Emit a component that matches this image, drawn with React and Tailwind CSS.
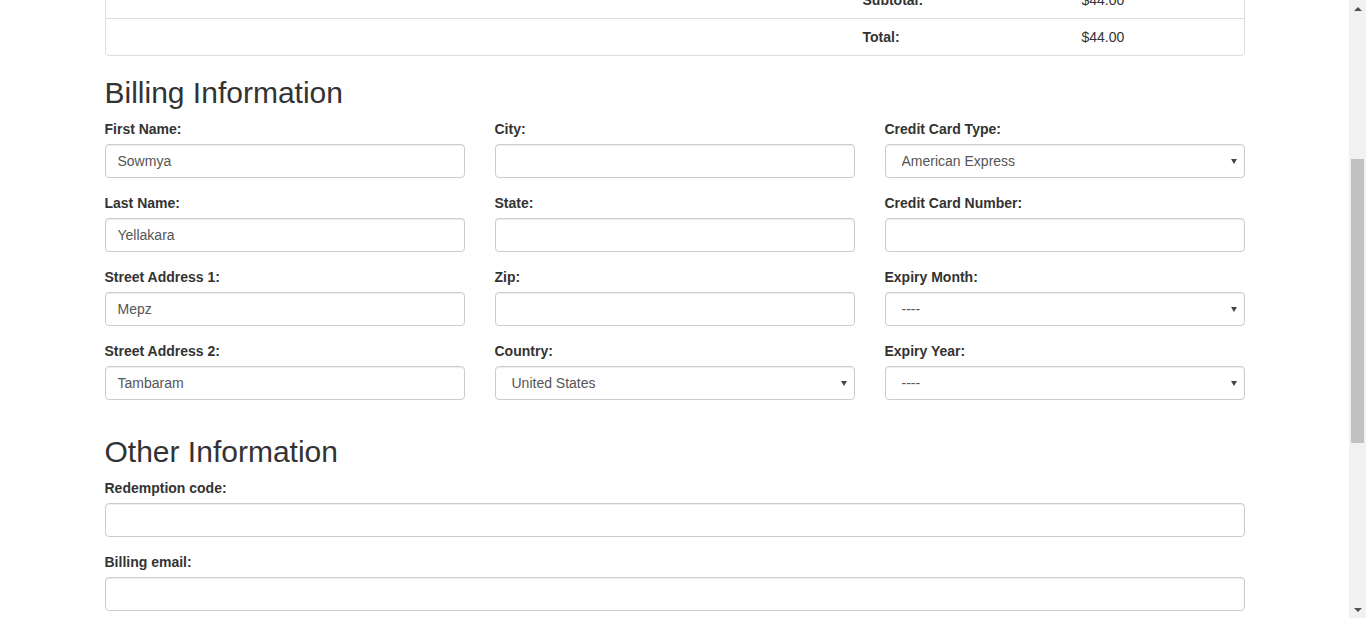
const billingRows = [
  [
    { label: "First Name:", value: "Sowmya" },
    { label: "City:", value: "" },
    { label: "Credit Card Type:", value: "American Express", select: true },
  ],
  [
    { label: "Last Name:", value: "Yellakara" },
    { label: "State:", value: "" },
    { label: "Credit Card Number:", value: "" },
  ],
  [
    { label: "Street Address 1:", value: "Mepz" },
    { label: "Zip:", value: "" },
    { label: "Expiry Month:", value: "----", select: true },
  ],
  [
    { label: "Street Address 2:", value: "Tambaram" },
    { label: "Country:", value: "United States", select: true },
    { label: "Expiry Year:", value: "----", select: true },
  ],
];

const inputClass =
  "block w-full h-[34px] px-3 text-[14px] text-[#555] bg-white border border-[#ccc] rounded-[4px] shadow-[inset_0_1px_1px_rgba(0,0,0,0.075)] outline-none";

const Field = ({ label, value, select }) => {
  return (
    <div className="mb-[15px]">
      <label className="block mb-[5px] text-[14px] leading-[20px] font-bold text-[#333]">
        {label}
      </label>

      {select ? (
        <div className="relative">
          <select
            defaultValue={value}
            className={`${inputClass} appearance-none pl-4`}
          >
            <option>{value}</option>
          </select>
          {/* arrow */}
          <span className="pointer-events-none absolute right-[8px] top-[15px] w-0 h-0 border-l-[3px] border-r-[3px] border-t-[5px] border-l-transparent border-r-transparent border-t-[#444]" />
        </div>
      ) : (
        <input type="text" defaultValue={value} className={inputClass} />
      )}
    </div>
  );
};

const Scrollbar = () => {
  return (
    <div className="w-[17px] shrink-0 bg-[#f1f1f1] flex flex-col">
      <div className="h-[17px] flex items-center justify-center">
        <span className="w-0 h-0 border-l-[4px] border-r-[4px] border-b-[4px] border-l-transparent border-r-transparent border-b-[#505050]" />
      </div>

      <div className="flex-1">
        <div className="mt-[142px] mx-[2px] h-[284px] bg-[#c1c1c1]" />
      </div>

      <div className="h-[17px] flex items-center justify-center">
        <span className="w-0 h-0 border-l-[4px] border-r-[4px] border-t-[4px] border-l-transparent border-r-transparent border-t-[#505050]" />
      </div>
    </div>
  );
};

const App = () => {
  return (
    <div
      className="flex h-[618px] overflow-hidden bg-white text-[#333]"
      style={{ fontFamily: '"Liberation Sans", Arial, sans-serif' }}
    >
      <main className="flex-1 overflow-hidden">
        <div className="w-[1170px] mx-auto px-[15px]">

          {/* ORDER SUMMARY (scrolled past) */}
          <div className="-mt-[19px] border border-[#ddd] rounded-[4px] text-[14px] leading-[20px]">
            <div className="flex border-b border-[#ddd]">
              <div className="w-[749px]" />
              <div className="w-[219px] p-2 font-bold">Subtotal:</div>
              <div className="flex-1 p-2">$44.00</div>
            </div>
            <div className="flex">
              <div className="w-[749px]" />
              <div className="w-[219px] p-2 font-bold">Total:</div>
              <div className="flex-1 p-2">$44.00</div>
            </div>
          </div>

          {/* BILLING */}
          <h2 className="mt-[20px] mb-[10px] text-[30px] leading-[33px] font-medium text-[#333]">
            Billing Information
          </h2>

          <div>
            {billingRows.map((row, i) => (
              <div key={i} className="grid grid-cols-3 gap-x-[30px]">
                {row.map((field) => (
                  <Field key={field.label} {...field} />
                ))}
              </div>
            ))}
          </div>

          {/* OTHER */}
          <h2 className="mt-[20px] mb-[10px] text-[30px] leading-[33px] font-medium text-[#333]">
            Other Information
          </h2>

          <Field label="Redemption code:" value="" />
          <Field label="Billing email:" value="" />
        </div>
      </main>

      <Scrollbar />
    </div>
  );
};

export default App;
